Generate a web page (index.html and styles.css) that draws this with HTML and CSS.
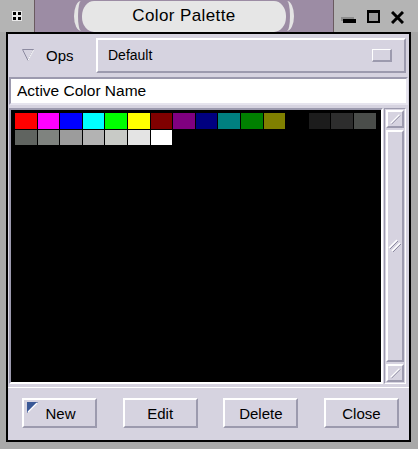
FILE: index.html
```html
<!DOCTYPE html>
<html lang="en">
<head>
<meta charset="UTF-8">
<meta name="viewport" content="width=device-width, initial-scale=1">
<title>Color Palette</title>
<link rel="stylesheet" href="styles.css">
</head>
<body>

<div class="titlebar">
  <div class="menu-btn">
    <div class="dots"><span></span><span></span><span></span><span></span></div>
  </div>
  <div class="title-area">
    <div class="arc arc-left"></div>
    <div class="banner">Color Palette</div>
    <div class="arc arc-right"></div>
  </div>
  <div class="win-btns">
    <div class="btn-min"></div>
    <div class="btn-max"></div>
    <div class="btn-close">
      <svg width="13" height="13" viewBox="0 0 13 13">
        <path d="M1 1 L12 12 M12 1 L1 12" stroke="#000" stroke-width="3"/>
      </svg>
    </div>
  </div>
</div>

<div class="frame">
  <div class="ops-row">
    <div class="ops-label">
      <svg width="12" height="12" viewBox="0 0 12 12">
        <path d="M0.5 0.5 L11.5 0.5 L6 11.5 Z" fill="none" stroke="#8c8aa0" stroke-width="1"/>
        <path d="M11.5 1 L6 11.5" stroke="#fff" stroke-width="1"/>
      </svg>
      <span>Ops</span>
    </div>
    <div class="option-menu">
      <span>Default</span>
      <div class="indicator"></div>
    </div>
  </div>

  <div class="name-field">Active Color Name</div>

  <div class="palette">
    <div class="swatch-area">
      <div class="swatches" id="swatches"></div>
    </div>
    <div class="scrollbar">
      <div class="sb-arrow">
        <svg width="16" height="16" viewBox="0 0 16 16"><path d="M3 13 L13 3" stroke="#fff" stroke-width="1.5"/><path d="M4 14 L14 4" stroke="#8c8aa0" stroke-width="1"/></svg>
      </div>
      <div class="sb-thumb">
        <svg class="grip" width="14" height="16" viewBox="0 0 14 16"><path d="M1 10 L9 2 M4 13 L12 5" stroke="#fff" stroke-width="1.5"/><path d="M2 11 L10 3 M5 14 L13 6" stroke="#8c8aa0" stroke-width="1"/></svg>
      </div>
      <div class="sb-arrow">
        <svg width="16" height="16" viewBox="0 0 16 16"><path d="M3 13 L13 3" stroke="#fff" stroke-width="1.5"/><path d="M4 14 L14 4" stroke="#8c8aa0" stroke-width="1"/></svg>
      </div>
    </div>
  </div>

  <div class="buttons">
    <div class="push-btn new-btn">
      <svg class="new-icon" width="11" height="11" viewBox="0 0 11 11">
        <path d="M0 0 L11 0 L0 11 Z" fill="#3a5896"/>
        <path d="M10 1 L1 10" stroke="#fff" stroke-width="1.2"/>
      </svg>
      New
    </div>
    <div class="push-btn">Edit</div>
    <div class="push-btn">Delete</div>
    <div class="push-btn">Close</div>
  </div>
</div>

<script>
var colors = [
  '#ff0000', '#ff00ff', '#0000ff', '#00ffff', '#00ff00', '#ffff00', '#800000', '#800080',
  '#000080', '#008080', '#008000', '#808000', '#000000', '#1c1c1c', '#2d2d2d', '#4a4d4a',
  '#606460', '#7f837f', '#9c9c9c', '#b3b3b3', '#c8cac6', '#e4e4e4', '#ffffff'
];

function loadSwatches() {
  var box = document.getElementById('swatches');
  colors.forEach(function (c) {
    var div = document.createElement('div');
    div.className = 'swatch';
    div.style.background = c;
    box.appendChild(div);
  });
}

loadSwatches();
</script>

</body>
</html>
```

FILE: styles.css
```css
body {
  margin: 0;
  padding: 0;
  width: 418px;
  height: 449px;
  background: #a9a9a9;
  font-family: 'Liberation Sans', Arial, sans-serif;
  overflow: hidden;
}
.titlebar {
  display: flex;
  height: 32px;
  background: #b4b4b4;
}
.menu-btn {
  width: 34px;
  border-right: 1px solid #6a5a60;
  display: flex;
  align-items: center;
  justify-content: center;
}
.dots {
  display: grid;
  grid-template-columns: 3px 3px;
  gap: 2px;
  padding: 1px;
  background: #e8e8e8;
}
.dots span {
  width: 3px;
  height: 3px;
  background: #000;
}
.title-area {
  flex: 1;
  background: #9c8ca4;
  display: flex;
  align-items: center;
  padding-left: 39px;
  border-right: 1px solid #6a5a60;
}
.arc {
  width: 14px;
  height: 30px;
  border-radius: 50%;
  box-sizing: border-box;
}
.arc-left {
  border-left: 4px solid #e4e4e4;
  margin-right: -6px;
}
.arc-right {
  border-right: 4px solid #e4e4e4;
  margin-left: -6px;
}
.banner {
  width: 204px;
  height: 31px;
  background: #e6e6e6;
  border-radius: 12px / 15px;
  box-sizing: border-box;
  display: flex;
  align-items: center;
  justify-content: center;
  font-size: 17px;
  letter-spacing: 0.4px;
  color: #000;
  padding-bottom: 1px;
}
.win-btns {
  width: 84px;
  display: flex;
  align-items: center;
  gap: 11px;
  padding-left: 9px;
  box-sizing: border-box;
}
.btn-min {
  width: 13px;
  height: 4px;
  background: #000;
  box-shadow: -2px -2px 0 #8c8c8c;
  margin-top: 10px;
}
.btn-max {
  width: 9px;
  height: 8px;
  border: 2px solid #000;
  border-top-width: 3px;
  background: #9a9a9a;
}
.btn-close {
  width: 13px;
  height: 13px;
}
.frame {
  margin: 0 7px 0 6px;
  height: 406px;
  border: 2px solid #000;
  background: #d6d3e0;
  display: flex;
  flex-direction: column;
}
.ops-row {
  display: flex;
  align-items: center;
  height: 42px;
  padding-left: 14px;
}
.ops-label {
  display: flex;
  align-items: center;
  gap: 12px;
  font-size: 15px;
}
.option-menu {
  margin-left: auto;
  margin-right: 3px;
  width: 310px;
  height: 35px;
  box-sizing: border-box;
  border-top: 2px solid #fff;
  border-left: 2px solid #fff;
  border-bottom: 2px solid #9c9aae;
  border-right: 2px solid #9c9aae;
  display: flex;
  align-items: center;
  justify-content: space-between;
  padding: 0 12px 0 10px;
  font-size: 14px;
}
.indicator {
  width: 17px;
  height: 10px;
  border-top: 1px solid #fff;
  border-left: 1px solid #fff;
  border-bottom: 2px solid #9c9aae;
  border-right: 2px solid #9c9aae;
}
.name-field {
  margin: 1px 1px 0 1px;
  height: 28px;
  box-sizing: border-box;
  background: #fff;
  border: 2px solid #9c9aae;
  border-bottom-color: #e6e4ee;
  border-right-color: #e6e4ee;
  padding-left: 6px;
  display: flex;
  align-items: center;
  font-size: 15.5px;
}
.palette {
  display: flex;
  margin: 3px 3px 0 1px;
  height: 276px;
  gap: 1px;
}
.swatch-area {
  flex: 1;
  border: 2px solid #9c9aae;
  border-bottom-color: #fff;
  border-right-color: #fff;
  background: #000;
  padding: 3px 0 0 4px;
}
.swatches {
  display: grid;
  grid-template-columns: repeat(16, 21.6px);
  grid-auto-rows: 15.5px;
  gap: 1px;
}
.scrollbar {
  width: 22px;
  box-sizing: border-box;
  border: 1px solid #9c9aae;
  border-right-color: #fff;
  border-bottom-color: #fff;
  padding: 1px;
  display: flex;
  flex-direction: column;
  gap: 2px;
}
.sb-arrow, .sb-thumb {
  border-top: 2px solid #fff;
  border-left: 2px solid #fff;
  border-bottom: 2px solid #9c9aae;
  border-right: 2px solid #9c9aae;
  display: flex;
  align-items: center;
  justify-content: center;
}
.sb-arrow {
  height: 14px;
}
.sb-thumb {
  flex: 1;
}
.buttons {
  margin-top: 3px;
  border-top: 1px solid #fff;
  flex: 1;
  display: flex;
  align-items: flex-start;
  justify-content: space-between;
  padding: 10px 10px 0 14px;
}
.push-btn {
  width: 75px;
  height: 30px;
  box-sizing: border-box;
  border-top: 2px solid #fff;
  border-left: 2px solid #fff;
  border-bottom: 2px solid #9c9aae;
  border-right: 2px solid #9c9aae;
  display: flex;
  align-items: center;
  justify-content: center;
  font-size: 15px;
  position: relative;
}
.new-btn {
  padding-left: 2px;
}
.new-icon {
  position: absolute;
  left: 3px;
  top: 2px;
}
```
